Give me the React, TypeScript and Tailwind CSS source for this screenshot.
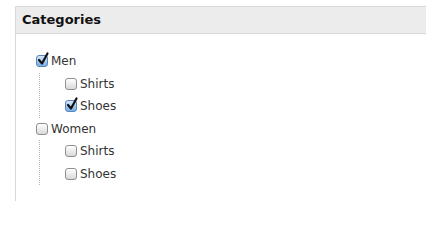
import { Fragment } from "react";

type Node = { label: string; checked: boolean; children?: Node[] };

const tree: Node[] = [
  {
    label: "Men",
    checked: true,
    children: [
      { label: "Shirts", checked: false },
      { label: "Shoes", checked: true },
    ],
  },
  {
    label: "Women",
    checked: false,
    children: [
      { label: "Shirts", checked: false },
      { label: "Shoes", checked: false },
    ],
  },
];

const Box = ({ checked }: { checked: boolean }) => (
  <span className="relative inline-block w-[12px] h-[12px] shrink-0">
    {checked ? (
      <span className="absolute inset-0 rounded-[3px] border border-[#5b86b8] bg-gradient-to-b from-[#d4e7fb] to-[#77aee8]" />
    ) : (
      <span className="absolute inset-0 rounded-[3px] border border-[#8f8f8f] bg-gradient-to-b from-[#ffffff] to-[#d9d9d9] shadow-[inset_0_1px_0_#fff]" />
    )}
    {checked && (
      <svg className="absolute left-[1px] top-[-3px]" width="12" height="14" viewBox="0 0 12 14">
        <path d="M2 8 L5 11.5 L10.5 1.5" fill="none" stroke="#111" strokeWidth="2.2" strokeLinecap="round" strokeLinejoin="round" />
      </svg>
    )}
  </span>
);

const Row = ({ node }: { node: Node }) => (
  <div className="flex items-center h-[22.5px]">
    <Box checked={node.checked} />
    <span className="ml-[3px] text-[12px] text-[#333]">{node.label}</span>
  </div>
);

export default function App() {
  return (
    <div className="w-[426px] h-[201px] bg-white overflow-hidden pt-[6px] pl-[15px]" style={{ fontFamily: '"DejaVu Sans", Verdana, sans-serif' }}>
      <div className="h-[195px] border-l border-t border-[#d9d9d9] flex flex-col">
        <div className="h-[27px] bg-[#ececec] border-b border-[#d9d9d9] flex items-center pl-[6px]">
          <span className="text-[13px] font-bold text-[#111]">Categories</span>
        </div>
        <ul className="pt-[16px] pl-[20px]">
          {tree.map((n, i) => (
            <Fragment key={i}>
              <li>
                <Row node={n} />
                <ul className="ml-[3px] border-l border-dotted border-[#b5b5b5] pl-[25px]">
                  {n.children?.map((c, j) => (
                    <li key={j}>
                      <Row node={c} />
                    </li>
                  ))}
                </ul>
              </li>
            </Fragment>
          ))}
        </ul>
      </div>
    </div>
  );
}
